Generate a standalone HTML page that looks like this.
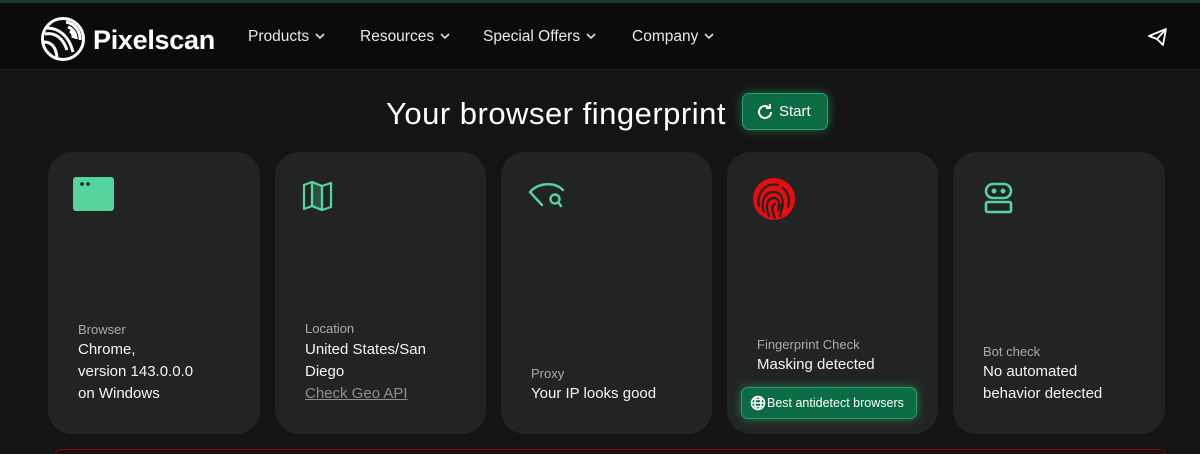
<!DOCTYPE html>
<html style="width:1200px;height:454px;overflow:hidden"><head><meta charset="utf-8"><style>
*{margin:0;padding:0;box-sizing:border-box}
body{width:1200px;height:454px;overflow:hidden;background:#141414;font-family:"Liberation Sans",sans-serif;color:#fff;position:relative}
.hdr{position:absolute;left:0;top:0;width:1200px;height:70px;background:#0b0b0b;border-top:3px solid #163a33;border-bottom:1px solid #1e1e1e}
.logo{position:absolute;left:40px;top:13px}
.brand{position:absolute;left:93px;top:22px;font-size:27px;font-weight:bold;letter-spacing:-0.3px}
.nav{position:absolute;top:25px;font-size:15.5px;color:#e8e8e8}
.nav svg{margin-left:6px;vertical-align:2px}
h1{position:absolute;left:386px;top:96px;font-size:31px;font-weight:normal;letter-spacing:0.5px}
.start{position:absolute;left:742px;top:93px;width:86px;height:37px;border-radius:7px;background:#0b6b43;border:1px solid #2aa06a;box-shadow:0 0 10px rgba(60,220,140,.45);font-size:15px;padding:9px 0 0 36px}
.start svg{position:absolute;left:12px;top:8px}
.card{position:absolute;top:152px;height:282px;background:#212423;border-radius:24px}
.lbl{position:absolute;left:30px;font-size:13px;color:#a9acab}
.val{position:absolute;left:30px;font-size:15px;line-height:22px;color:#f4f4f4}
.ic{position:absolute;left:24px;top:24px}
.bab{position:absolute;left:14px;top:235px;width:176px;height:32px;background:#0b6b43;border:1px solid #2aa06a;border-radius:7px;box-shadow:0 0 10px rgba(60,220,140,.45);font-size:12.5px;padding:8px 0 0 25px}
.bab svg{position:absolute;left:8px;top:7px}
.red{position:absolute;left:55px;top:449px;width:1110px;height:5px;border:1px solid #7a0c0c;border-bottom:none;border-radius:18px 18px 0 0;background:#1c0d0d}
</style></head><body>
<div class="hdr">
<svg class="logo" width="46" height="46" viewBox="0 0 46 46" fill="none" stroke="#fff" stroke-width="3"><circle cx="23" cy="23" r="20.5"/><path d="M26 6a17 17 0 0 1 14 18M28 11a12 12 0 0 1 8 12M30 15a7 7 0 0 1 3 7"/><path d="M5 18c10-2 18 4 22 16M7 12c12 0 22 8 26 24M4 26c8 0 12 6 13 15"/></svg>
<div class="brand">Pixelscan</div>
<div class="nav" style="left:248px">Products<svg width="10" height="6"><path d="M1 1l4 4 4-4" stroke="#ddd" stroke-width="1.6" fill="none"/></svg></div>
<div class="nav" style="left:360px">Resources<svg width="10" height="6"><path d="M1 1l4 4 4-4" stroke="#ddd" stroke-width="1.6" fill="none"/></svg></div>
<div class="nav" style="left:483px">Special Offers<svg width="10" height="6"><path d="M1 1l4 4 4-4" stroke="#ddd" stroke-width="1.6" fill="none"/></svg></div>
<div class="nav" style="left:632px">Company<svg width="10" height="6"><path d="M1 1l4 4 4-4" stroke="#ddd" stroke-width="1.6" fill="none"/></svg></div>
<svg style="position:absolute;left:1148px;top:25px" width="20" height="18" viewBox="0 0 20 18" fill="none" stroke="#fff" stroke-width="1.8" stroke-linejoin="round"><path d="M1 8L18 1 15 17 9 11 1 8zM9 11l9-10"/></svg>
</div>
<h1>Your browser fingerprint</h1>
<div class="start"><svg width="20" height="20" viewBox="0 0 20 20" fill="none" stroke="#fff" stroke-width="2"><path d="M16 10a6 6 0 1 1-2-4.5"/><path d="M15 2v4h-4"/></svg>Start</div>

<div class="card" style="left:48px;width:212px">
<svg class="ic" width="44" height="38"><rect x="1" y="1" width="41" height="34" rx="3" fill="#55d49d"/><circle cx="10" cy="8" r="1.8" fill="#1a1a1a"/><circle cx="16" cy="8" r="1.8" fill="#1a1a1a"/></svg>
<div class="lbl" style="top:170px">Browser</div>
<div class="val" style="top:187px">Chrome,<br>version 143.0.0.0<br>on Windows</div></div>

<div class="card" style="left:275px;width:211px">
<svg class="ic" width="40" height="36" viewBox="0 0 40 36" fill="none" stroke="#55d49d" stroke-width="2.2" stroke-linejoin="round"><path d="M5 9l8-3v24l-8 3zM13 6l10 4v24l-10-4zM23 10l9-3v24l-9 3z"/><path d="M13 6l10 4v24l-10-4z" fill="#55d49d" fill-opacity=".25"/></svg>
<div class="lbl" style="top:169px">Location</div>
<div class="val" style="top:187px">United States/San<br>Diego<br><span style="color:#8d908f;text-decoration:underline">Check Geo API</span></div></div>

<div class="card" style="left:501px;width:211px">
<svg class="ic" width="44" height="36" viewBox="0 0 44 36" fill="none" stroke="#55d49d" stroke-width="2.4" stroke-linecap="round"><path d="M5 16C14 6 30 6 38 14M5 16l12 13"/><circle cx="30" cy="23" r="4.5"/><path d="M33 26l3 4"/></svg>
<div class="lbl" style="top:214px">Proxy</div>
<div class="val" style="top:231px">Your IP looks good</div></div>

<div class="card" style="left:727px;width:211px">
<svg class="ic" width="46" height="46" viewBox="0 0 46 46"><circle cx="23" cy="23" r="21" fill="#e80c0c"/><g fill="none" stroke="#212423" stroke-width="2.2" stroke-linecap="round"><path d="M8 30C5 16 16 6 27 9M32 12c6 5 7 12 5 19M13 36c-4-12 2-21 11-20 7 1 9 8 7 17M18 40c-4-10-2-18 5-18 5 0 6 6 4 13M24 42c-3-6-4-13 0-14M29 40c1-4 2-8 1-11"/></g></svg>
<div class="lbl" style="top:185px">Fingerprint Check</div>
<div class="val" style="top:202px">Masking detected</div>
<div class="bab"><svg width="16" height="16" viewBox="0 0 16 16" fill="none" stroke="#fff" stroke-width="1.5"><circle cx="8" cy="8" r="6.5"/><ellipse cx="8" cy="8" rx="3" ry="6.5"/><path d="M1.5 8h13M3 4.5h10M3 11.5h10"/></svg>Best antidetect browsers</div></div>

<div class="card" style="left:953px;width:212px">
<svg class="ic" width="40" height="40" viewBox="0 0 40 40" fill="none" stroke="#55d49d" stroke-width="2.6"><rect x="9" y="8" width="25" height="14" rx="7"/><rect x="9" y="26" width="25" height="10" rx="1.5"/><circle cx="17" cy="15" r="1.2" fill="#55d49d"/><circle cx="26" cy="15" r="1.2" fill="#55d49d"/></svg>
<div class="lbl" style="top:192px">Bot check</div>
<div class="val" style="top:209px">No automated<br>behavior detected</div></div>
<div class="red"></div>
</body></html>
